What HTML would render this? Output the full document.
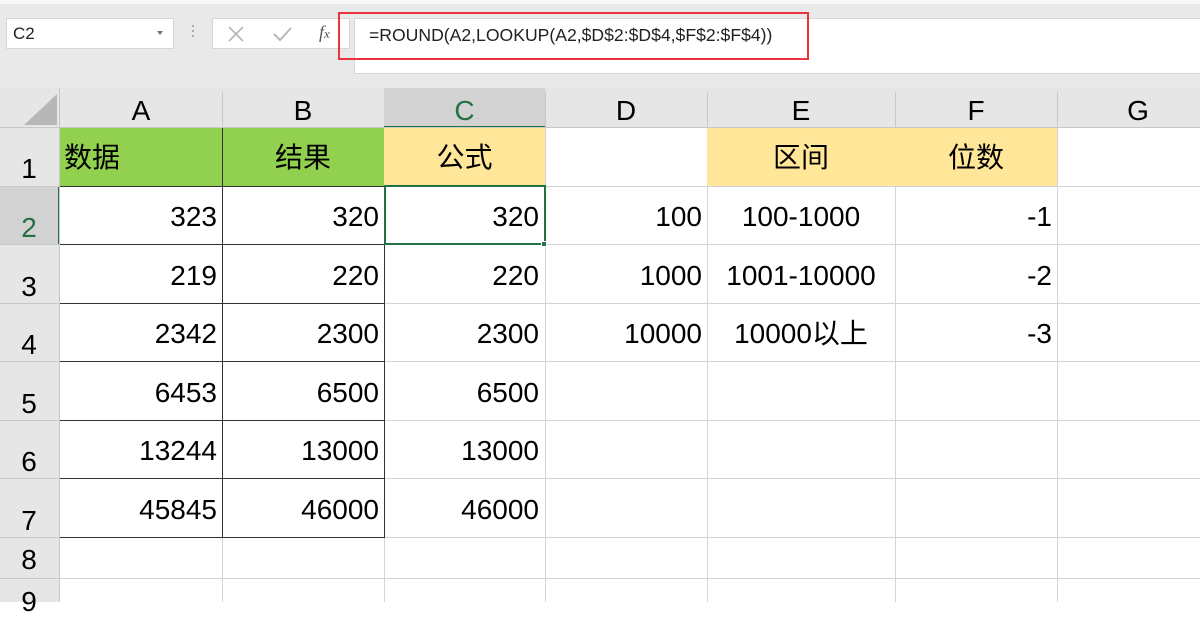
<!DOCTYPE html>
<html><head><meta charset="utf-8"><style>
*{margin:0;padding:0;box-sizing:border-box}
body{width:1200px;height:602px;overflow:hidden;background:#fff;position:relative;font-family:"Liberation Sans","Noto Sans CJK SC",sans-serif;color:#000}
div{position:absolute}
.c{font-size:28px;line-height:1;white-space:nowrap}
.hd{background:#e6e6e6}
.vl{width:1px;background:#d4d4d4}
.hl{height:1px;background:#d4d4d4}
</style></head><body>
<div style="left:0;top:0;width:1200px;height:88px;background:#e9e9e9"></div>
<div style="left:0;top:0;width:1200px;height:4px;background:#f7f7f7"></div>
<div style="left:6px;top:18px;width:168px;height:31px;background:#fff;border:1px solid #d6d6d6"></div>
<div style="left:13px;top:24px;font-size:17px;color:#222">C2</div>
<div style="left:157px;top:31px;width:0;height:0;border-left:3px solid transparent;border-right:3px solid transparent;border-top:4px solid #777"></div>
<div style="left:192px;top:25px;width:2px;height:2px;background:#aaa;box-shadow:0 5px #aaa,0 10px #aaa"></div>
<div style="left:212px;top:18px;width:138px;height:31px;background:#fff;border:1px solid #d6d6d6"></div>
<svg style="position:absolute;left:226px;top:24px" width="20" height="20"><path d="M3 3L17 17M17 3L3 17" stroke="#b8b8b8" stroke-width="1.6"/></svg>
<svg style="position:absolute;left:271px;top:24px" width="22" height="20"><path d="M3 10L9 16L20 4" stroke="#b8b8b8" stroke-width="2" fill="none"/></svg>
<div style="left:319px;top:22px;font-family:'Liberation Serif',serif;font-style:italic;font-size:18px;color:#555">f<span style="font-size:13px">x</span></div>
<div style="left:354px;top:18px;width:846px;height:56px;background:#fff;border:1px solid #d6d6d6;border-right:none"></div>
<div style="left:338px;top:12px;width:471px;height:48px;border:2px solid #e8343a"></div>
<div style="left:369px;top:25px;font-size:17.6px;color:#222">=ROUND(A2,LOOKUP(A2,$D$2:$D$4,$F$2:$F$4))</div>
<div class="hd" style="left:0;top:88px;width:1200px;height:40px"></div>
<div style="left:384px;top:88px;width:161px;height:40px;background:#d2d2d2;border-bottom:2px solid #217346"></div>
<svg style="position:absolute;left:22px;top:92px" width="36" height="34"><polygon points="35,2 35,33 2,33" fill="#b7b7b7"/></svg>
<div class="hd" style="left:0;top:128px;width:60px;height:474px"></div>
<div style="left:0;top:186px;width:58px;height:58px;background:#d2d2d2"></div>
<div style="left:58px;top:186px;width:2px;height:58px;background:#217346"></div>
<div class="c" style="left:60px;top:97px;width:162px;text-align:center">A</div>
<div class="c" style="left:222px;top:97px;width:162px;text-align:center">B</div>
<div class="c" style="left:384px;top:97px;width:161px;text-align:center;color:#217346">C</div>
<div class="c" style="left:545px;top:97px;width:162px;text-align:center">D</div>
<div class="c" style="left:707px;top:97px;width:188px;text-align:center">E</div>
<div class="c" style="left:895px;top:97px;width:162px;text-align:center">F</div>
<div class="c" style="left:1057px;top:97px;width:162px;text-align:center">G</div>
<div class="vl" style="left:59px;top:88px;height:514px;background:#c8c8c8"></div>
<div class="vl" style="left:222px;top:92px;height:36px;background:#c8c8c8"></div>
<div class="vl" style="left:545px;top:92px;height:36px;background:#c8c8c8"></div>
<div class="vl" style="left:707px;top:92px;height:36px;background:#c8c8c8"></div>
<div class="vl" style="left:895px;top:92px;height:36px;background:#c8c8c8"></div>
<div class="vl" style="left:1057px;top:92px;height:36px;background:#c8c8c8"></div>
<div class="hl" style="left:0;top:127px;width:1200px;background:#c8c8c8"></div>
<div class="c" style="left:0;top:155px;width:58px;text-align:center">1</div>
<div class="c" style="left:0;top:214px;width:58px;text-align:center;color:#217346">2</div>
<div class="c" style="left:0;top:273px;width:58px;text-align:center">3</div>
<div class="c" style="left:0;top:331px;width:58px;text-align:center">4</div>
<div class="c" style="left:0;top:390px;width:58px;text-align:center">5</div>
<div class="c" style="left:0;top:448px;width:58px;text-align:center">6</div>
<div class="c" style="left:0;top:507px;width:58px;text-align:center">7</div>
<div class="c" style="left:0;top:546px;width:58px;text-align:center">8</div>
<div class="c" style="left:0;top:588px;width:58px;text-align:center">9</div>
<div class="hl" style="left:0;top:186px;width:60px;background:#c8c8c8"></div>
<div class="hl" style="left:0;top:244px;width:60px;background:#c8c8c8"></div>
<div class="hl" style="left:0;top:303px;width:60px;background:#c8c8c8"></div>
<div class="hl" style="left:0;top:361px;width:60px;background:#c8c8c8"></div>
<div class="hl" style="left:0;top:420px;width:60px;background:#c8c8c8"></div>
<div class="hl" style="left:0;top:478px;width:60px;background:#c8c8c8"></div>
<div class="hl" style="left:0;top:537px;width:60px;background:#c8c8c8"></div>
<div class="hl" style="left:0;top:578px;width:60px;background:#c8c8c8"></div>
<div class="vl" style="left:222px;top:128px;height:474px"></div>
<div class="vl" style="left:384px;top:128px;height:474px"></div>
<div class="vl" style="left:545px;top:128px;height:474px"></div>
<div class="vl" style="left:707px;top:128px;height:474px"></div>
<div class="vl" style="left:895px;top:128px;height:474px"></div>
<div class="vl" style="left:1057px;top:128px;height:474px"></div>
<div class="hl" style="left:60px;top:186px;width:1140px"></div>
<div class="hl" style="left:60px;top:244px;width:1140px"></div>
<div class="hl" style="left:60px;top:303px;width:1140px"></div>
<div class="hl" style="left:60px;top:361px;width:1140px"></div>
<div class="hl" style="left:60px;top:420px;width:1140px"></div>
<div class="hl" style="left:60px;top:478px;width:1140px"></div>
<div class="hl" style="left:60px;top:537px;width:1140px"></div>
<div class="hl" style="left:60px;top:578px;width:1140px"></div>
<div style="left:60px;top:128px;width:324px;height:58px;background:#92d050"></div>
<div style="left:222px;top:128px;width:1px;height:58px;background:#333"></div>
<div style="left:384px;top:128px;width:161px;height:58px;background:#ffe699"></div>
<div style="left:707px;top:128px;width:350px;height:58px;background:#ffe699"></div>
<div style="left:60px;top:186px;width:325px;height:352px;border:1px solid #333;border-left:none"></div>
<div style="left:222px;top:186px;width:1px;height:352px;background:#333"></div>
<div style="left:60px;top:244px;width:325px;height:1px;background:#333"></div>
<div style="left:60px;top:303px;width:325px;height:1px;background:#333"></div>
<div style="left:60px;top:361px;width:325px;height:1px;background:#333"></div>
<div style="left:60px;top:420px;width:325px;height:1px;background:#333"></div>
<div style="left:60px;top:478px;width:325px;height:1px;background:#333"></div>
<div style="left:384px;top:185px;width:162px;height:60px;border:2px solid #217346"></div>
<div style="left:541px;top:241px;width:6px;height:6px;background:#217346;border:1px solid #fff"></div>
<div class="c" style="left:64px;top:144px">数据</div>
<div class="c" style="left:222px;top:144px;width:162px;text-align:center">结果</div>
<div class="c" style="left:384px;top:144px;width:161px;text-align:center">公式</div>
<div class="c" style="left:707px;top:144px;width:188px;text-align:center">区间</div>
<div class="c" style="left:895px;top:144px;width:162px;text-align:center">位数</div>
<div class="c" style="left:60px;top:203px;width:157px;text-align:right">323</div>
<div class="c" style="left:222px;top:203px;width:157px;text-align:right">320</div>
<div class="c" style="left:384px;top:203px;width:155px;text-align:right">320</div>
<div class="c" style="left:545px;top:203px;width:157px;text-align:right">100</div>
<div class="c" style="left:707px;top:203px;width:188px;text-align:center">100-1000</div>
<div class="c" style="left:895px;top:203px;width:157px;text-align:right">-1</div>
<div class="c" style="left:60px;top:262px;width:157px;text-align:right">219</div>
<div class="c" style="left:222px;top:262px;width:157px;text-align:right">220</div>
<div class="c" style="left:384px;top:262px;width:155px;text-align:right">220</div>
<div class="c" style="left:545px;top:262px;width:157px;text-align:right">1000</div>
<div class="c" style="left:707px;top:262px;width:188px;text-align:center">1001-10000</div>
<div class="c" style="left:895px;top:262px;width:157px;text-align:right">-2</div>
<div class="c" style="left:60px;top:320px;width:157px;text-align:right">2342</div>
<div class="c" style="left:222px;top:320px;width:157px;text-align:right">2300</div>
<div class="c" style="left:384px;top:320px;width:155px;text-align:right">2300</div>
<div class="c" style="left:545px;top:320px;width:157px;text-align:right">10000</div>
<div class="c" style="left:707px;top:320px;width:188px;text-align:center">10000以上</div>
<div class="c" style="left:895px;top:320px;width:157px;text-align:right">-3</div>
<div class="c" style="left:60px;top:379px;width:157px;text-align:right">6453</div>
<div class="c" style="left:222px;top:379px;width:157px;text-align:right">6500</div>
<div class="c" style="left:384px;top:379px;width:155px;text-align:right">6500</div>
<div class="c" style="left:60px;top:437px;width:157px;text-align:right">13244</div>
<div class="c" style="left:222px;top:437px;width:157px;text-align:right">13000</div>
<div class="c" style="left:384px;top:437px;width:155px;text-align:right">13000</div>
<div class="c" style="left:60px;top:496px;width:157px;text-align:right">45845</div>
<div class="c" style="left:222px;top:496px;width:157px;text-align:right">46000</div>
<div class="c" style="left:384px;top:496px;width:155px;text-align:right">46000</div>
</body></html>
